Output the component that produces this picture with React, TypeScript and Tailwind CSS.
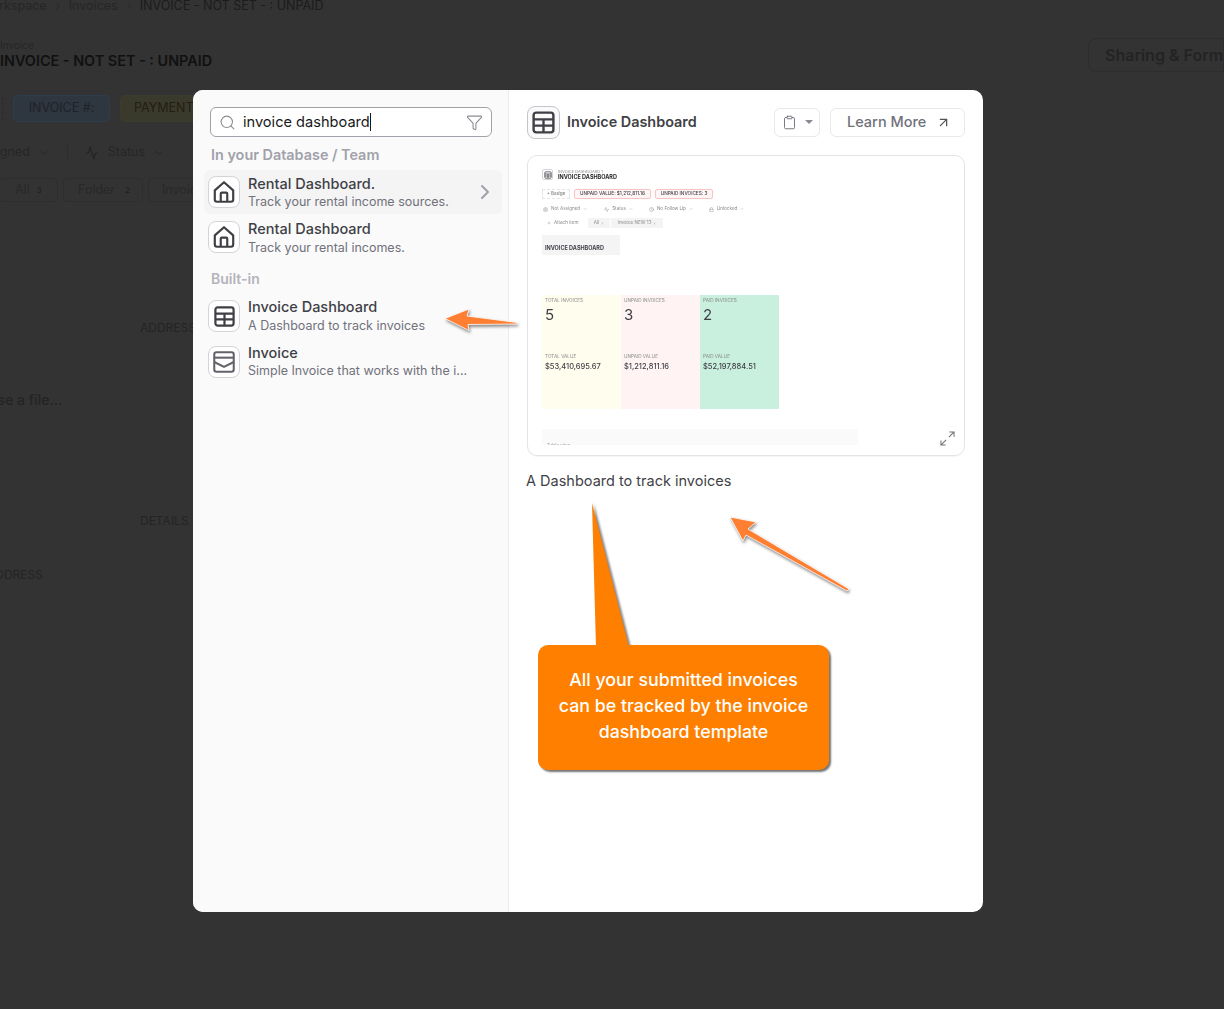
import React from "react";
import { Search, Funnel, ChevronRight, ChevronDown, Clipboard, ArrowUpRight, Activity, Plus, Clock, Lock, X } from "lucide-react";

const TableIcon = ({ size = 24, cls = "" }: { size?: number; cls?: string }) => (
  <svg width={size} height={size} viewBox="0 0 24 24" fill="none" stroke="currentColor" strokeWidth="2.300" className={cls}>
    <rect x="2.500" y="2.500" width="19" height="19" rx="2.500" />
    <path d="M2.500 9h19M2.500 15h19M12 9v12.500" />
  </svg>
);
const HomeIcon = ({ cls = "" }: { cls?: string }) => (
  <svg width="26" height="26" viewBox="0 0 24 24" fill="none" stroke="currentColor" strokeWidth="2" strokeLinejoin="round" className={cls}>
    <path d="M3.500 10.500 12 3l8.500 7.500V19a2 2 0 0 1-2 2h-13a2 2 0 0 1-2-2z" />
    <path d="M9 21v-7.500a1 1 0 0 1 1-1h4a1 1 0 0 1 1 1V21" />
  </svg>
);
const InvoiceIcon = ({ cls = "" }: { cls?: string }) => (
  <svg width="26" height="26" viewBox="0 0 24 24" fill="none" stroke="currentColor" strokeWidth="1.900" strokeLinejoin="round" className={cls}>
    <rect x="3" y="3" width="18" height="18" rx="2" />
    <path d="M3 8h18" />
    <path d="M3 12l9 4.500 9-4.500" />
  </svg>
);

const IconBox = ({ children }: { children: React.ReactNode }) => (
  <div className="w-[32px] h-[32px] shrink-0 rounded-[8px] border border-[#d4d4d8] bg-white flex items-center justify-center">{children}</div>
);

const Row = ({ icon, title, sub, active, h, textCls = "", subCls = "" }: { icon: React.ReactNode; title: string; sub: string; active?: boolean; h: string; textCls?: string; subCls?: string }) => (
  <div className={`flex items-center gap-[8px] pl-[4px] pr-[5px] rounded-[6px] ${h} ${active ? "bg-[#f4f4f5]" : ""}`}>
    <IconBox>{icon}</IconBox>
    <div className={`flex-1 min-w-0 ${textCls}`}>
      <div className="text-[14.5px] leading-[18px] font-medium text-[#3f3f46] whitespace-nowrap">{title}</div>
      <div className={`text-[12.5px] leading-[17px] text-[#71717a] whitespace-nowrap ${subCls}`}>{sub}</div>
    </div>
    {active && <ChevronRight size={24} className="text-[#a1a1aa]" />}
  </div>
);

const StatCard = ({ bg, a, n, b, v }: { bg: string; a: string; n: string; b: string; v: string }) => (
  <div className={`w-[79px] h-[114px] pl-[3px] pt-[3px] flex flex-col ${bg}`}>
    <div className="text-[4.700px] leading-[5px] text-[#8a8a8a]">{a}</div>
    <div className="text-[15px] leading-[18px] mt-[3px] text-[#3f3f46]">{n}</div>
    <div className="text-[4.700px] leading-[5px] mt-[30px] text-[#8a8a8a]">{b}</div>
    <div className="text-[7.500px] leading-[10px] mt-[3px] font-medium text-[#3f3f46]">{v}</div>
  </div>
);

export default function App() {
  return (
    <div className="relative h-[1009px] w-full overflow-hidden bg-[#333333] font-['Inter',sans-serif]">
      {/* dimmed page */}
      <div className="flex flex-col text-[#232323]">
        <div className="flex items-center h-[12px] -ml-[20px] text-[12.5px] text-[#262626] whitespace-nowrap">
          <span>Workspace</span>
          <ChevronRight size={12} className="mx-[5px] text-[#282828]" />
          <span>Invoices</span>
          <ChevronRight size={12} className="mx-[5px] text-[#282828]" />
          <span className="text-[#1c1c1c]">INVOICE - NOT SET - : UNPAID</span>
        </div>
        <div className="flex justify-between items-start mt-[26px] h-[57px]">
          <div className="pt-[1px]">
            <div className="text-[10px] leading-[12px] text-[#262626]">Invoice</div>
            <div className="text-[14.400px] leading-[18px] mt-[1px] font-semibold text-[#111111] whitespace-nowrap">INVOICE - NOT SET - : UNPAID</div>
          </div>
          <div className="w-[136px] h-[34px] overflow-hidden rounded-l-[8px] border border-[#2d2d2d] pl-[16px] flex items-center text-[16px] font-semibold text-[#232323] whitespace-nowrap">Sharing &amp; Forms</div>
        </div>
        <div className="flex gap-[10px] -ml-[8px] h-[27px]">
          <div className="w-[11px] rounded-[6px] border border-dashed border-[#2b2b2b]" />
          <div className="w-[97px] rounded-[5px] bg-[#2e3640] border border-[#2e3d4d] flex items-center justify-center text-[12.5px] text-[#1f2329]">INVOICE #:</div>
          <div className="w-[120px] rounded-[5px] bg-[#3a3a2c] border border-[#3c3c2c] pl-[13px] flex items-center text-[12.5px] text-[#241d10]">PAYMENT</div>
        </div>
        <div className="flex items-center h-[19px] mt-[21px] -ml-[25px] text-[12.5px] text-[#262626]">
          <span>Assigned</span>
          <ChevronDown size={12} className="ml-[8px]" />
          <div className="w-px h-[16px] bg-[#2d2d2d] mx-[17px]" />
          <Activity size={14} className="text-[#242424]" />
          <span className="ml-[9px]">Status</span>
          <ChevronDown size={12} className="ml-[8px]" />
        </div>
        <div className="flex gap-[5px] mt-[16px] h-[24px] -ml-[1px] text-[12.5px] text-[#282828]">
          <div className="w-[59px] rounded-[4px] border border-[#2e2e2e] pl-[15px] flex items-center gap-[7px]">All<span className="text-[8px] text-[#1f1f1f]">3</span></div>
          <div className="w-[80px] rounded-[4px] border border-[#2e2e2e] pl-[14px] flex items-center gap-[10px]">Folder<span className="text-[8px] text-[#1f1f1f]">2</span></div>
          <div className="w-[60px] rounded-[4px] border border-[#2e2e2e] pl-[13px] flex items-center">Invoice</div>
        </div>
        <div className="pl-[140px] mt-[118px] text-[12px] leading-[16px] text-[#242424]">ADDRESS</div>
        <div className="mt-[55px] -ml-[38px] text-[14px] leading-[18px] font-medium text-[#242424]">Choose a file...</div>
        <div className="pl-[140px] mt-[104px] text-[12px] leading-[16px] text-[#242424]">DETAILS</div>
        <div className="mt-[38px] -ml-[13px] text-[12px] leading-[16px] text-[#242424]">ADDRESS</div>
      </div>

      {/* modal */}
      <div className="absolute left-[193px] top-[90px] w-[790px] h-[822px] rounded-[10px] overflow-hidden bg-white flex">
        <div className="w-[316px] shrink-0 bg-[#fafafa] border-r border-[#ececee] pl-[11px] pr-[6px] pt-[17px]">
          <div className="ml-[6px] mr-[10px] h-[30px] rounded-[6px] border border-[#a1a1aa] bg-white flex items-center pl-[8px] pr-[8px]">
            <Search size={17} strokeWidth={1.500} className="text-[#8a8a93]" />
            <span className="ml-[7px] text-[14.600px] text-[#18181b] border-r border-[#18181b] leading-[18px]">invoice dashboard</span>
            <Funnel size={17} strokeWidth={1.500} className="ml-auto text-[#8a8a93]" />
          </div>
          <div className="ml-[7px] mt-[9px] text-[14.400px] leading-[18px] font-semibold text-[#a1a1aa]">In your Database / Team</div>
          <div className="mt-[6px]">
            <Row active h="h-[44px]" icon={<HomeIcon cls="text-[#3f3f46]" />} title="Rental Dashboard." sub="Track your rental income sources." />
            <div className="mt-[1px]"><Row h="h-[44px]" icon={<HomeIcon cls="text-[#3f3f46]" />} title="Rental Dashboard" sub="Track your rental incomes." textCls="mt-[1px]" subCls="mt-[1px]" /></div>
          </div>
          <div className="ml-[7px] mt-[11px] text-[14px] leading-[18px] font-semibold text-[#b4b4bb]">Built-in</div>
          <div className="mt-[5px]">
            <Row h="h-[46px]" icon={<TableIcon size={23} cls="text-[#3f3f46]" />} title="Invoice Dashboard" sub="A Dashboard to track invoices" textCls="-mt-[1px]" subCls="mt-[1px]" />
            <Row h="h-[46px]" icon={<InvoiceIcon cls="text-[#63636b]" />} title="Invoice" sub="Simple Invoice that works with the i..." textCls="-mt-[2px]" />
          </div>
        </div>

        <div className="flex-1 min-w-0 pl-[18px] pr-[18px] pt-[16px]">
          <div className="flex items-center h-[32px]">
            <div className="w-[33px] h-[33px] rounded-[8px] border border-[#c4c4ca] bg-[#fafafa] flex items-center justify-center"><TableIcon size={25} cls="text-[#3f3f46]" /></div>
            <div className="ml-[7px] text-[14.400px] font-semibold text-[#3f3f46]">Invoice Dashboard</div>
            <div className="ml-auto w-[46px] h-[29px] rounded-[6px] border border-[#e9e9ec] flex items-center pl-[7px]">
              <Clipboard size={15} strokeWidth={1.500} className="text-[#71717a]" />
              <span className="ml-[8px] w-0 h-0 border-l-[4px] border-r-[4px] border-t-[4px] border-l-transparent border-r-transparent border-t-[#8a8a93]" />
            </div>
            <div className="ml-[10px] w-[135px] h-[29px] rounded-[6px] border border-[#e9e9ec] flex items-center pl-[16px] text-[14.500px] font-medium text-[#71717a]">
              Learn More
              <ArrowUpRight size={15} className="ml-[10px] text-[#52525b]" />
            </div>
          </div>

          <div className="relative mt-[17px] h-[301px] rounded-[10px] border border-[#e4e4e7] overflow-hidden pl-[14px] pt-[13px] shadow-[0_1px_1px_rgba(0,0,0,0.04)] blur-[0.3px]">
            <div className="flex items-center gap-[5px]">
              <div className="w-[11px] h-[11px] rounded-[2px] border border-[#d4d4d8] flex items-center justify-center"><TableIcon size={8} cls="text-[#3f3f46]" /></div>
              <div>
                <div className="text-[4px] leading-[5px] text-[#8a8a8a]">INVOICE DASHBOARD 1</div>
                <div className="text-[5.500px] leading-[6px] font-bold text-[#27272a]">INVOICE DASHBOARD</div>
              </div>
            </div>
            <div className="flex gap-[4px] mt-[9px] h-[10px] text-[4.700px] font-medium">
              <div className="w-[28px] border border-dashed border-[#e4e4e7] rounded-[1px] flex items-center justify-center text-[#8a8a8a]">+ Badge</div>
              <div className="w-[77px] border border-[#f8c4c4] bg-[#fff5f5] rounded-[2px] flex items-center justify-center text-[#3f3f46] whitespace-nowrap">UNPAID VALUE: $1,212,811.16</div>
              <div className="w-[58px] border border-[#f8c4c4] bg-[#fff5f5] rounded-[2px] flex items-center justify-center text-[#3f3f46] whitespace-nowrap">UNPAID INVOICES: 3</div>
            </div>
            <div className="flex items-center mt-[5px] h-[10px] text-[4.600px] text-[#8a8a8a] pl-[1px] whitespace-nowrap">
              <span className="w-[5px] h-[5px] rounded-full bg-[#d4d4d8]" />
              <span className="ml-[3px]">Not Assigned</span><ChevronDown size={4} className="ml-[3px]" />
              <span className="ml-[17px]"><Activity size={5} /></span><span className="ml-[3px]">Status</span><ChevronDown size={4} className="ml-[3px]" />
              <span className="ml-[16px]"><Clock size={5} /></span><span className="ml-[3px]">No Follow Up</span><ChevronDown size={4} className="ml-[3px]" />
              <span className="ml-[16px]"><Lock size={5} /></span><span className="ml-[3px]">Unlocked</span><ChevronDown size={4} className="ml-[3px]" />
            </div>
            <div className="flex items-center mt-[4px] h-[10px] text-[4.600px] text-[#8a8a8a] whitespace-nowrap">
              <Plus size={4} className="ml-[5px]" />
              <span className="ml-[3px] w-[34px]">Attach item</span>
              <div className="w-[22px] h-[10px] bg-[#f4f4f5] flex items-center justify-center gap-[2px]">All<X size={3} /></div>
              <div className="ml-px w-[52px] h-[10px] bg-[#f4f4f5] flex items-center justify-center gap-[2px]">Invoice NEW 13<X size={3} /></div>
            </div>
            <div className="mt-[7px] w-[78px] h-[20px] bg-[#f4f4f5] flex items-end pl-[3px] pb-[4px] text-[5.500px] font-bold text-[#3f3f46] leading-[6px] whitespace-nowrap">INVOICE DASHBOARD</div>
            <div className="flex mt-[40px]">
              <StatCard bg="bg-[#fffeee]" a="TOTAL INVOICES" n="5" b="TOTAL VALUE" v="$53,410,695.67" />
              <StatCard bg="bg-[#fff3f3]" a="UNPAID INVOICES" n="3" b="UNPAID VALUE" v="$1,212,811.16" />
              <StatCard bg="bg-[#c9efdf]" a="PAID INVOICES" n="2" b="PAID VALUE" v="$52,197,884.51" />
            </div>
            <div className="mt-[20px] w-[316px] h-[16px] bg-[#fafafa] overflow-hidden pl-[5px] pt-[14px] text-[4.600px] text-[#a1a1aa] leading-[5px]">Table view</div>
            <svg width="15" height="15" viewBox="0 0 16 16" fill="none" stroke="#71717a" strokeWidth="1.100" className="absolute right-[9px] bottom-[9px]">
              <path d="M9.500 6.500 15 1M10 1h5v5M6.500 9.500 1 15M1 10v5h5" />
            </svg>
          </div>
          <div className="mt-[15px] -ml-[1px] text-[14.500px] leading-[20px] text-[#3f3f46]">A Dashboard to track invoices</div>
        </div>
      </div>

      {/* annotations */}
      <svg width="90" height="40" viewBox="0 0 90 40" className="absolute left-[438px] top-[300px] drop-shadow-[1px_2px_1.500px_rgba(0,0,0,0.45)]">
        <path d="M7 18.500 31 9l-2 7 50 6.500v1.500l-49 .5 1 6z" fill="#ff7f32" stroke="#ffffff" strokeWidth="0.800" strokeLinejoin="round" />
      </svg>
      <svg width="135" height="90" viewBox="0 0 135 90" className="absolute left-[722px] top-[510px] drop-shadow-[1px_2px_1.500px_rgba(0,0,0,0.45)]">
        <path d="M8 7 34 12 26 19 127 79 125 81 24 25 21 31z" fill="#ff7f32" stroke="#ffffff" strokeWidth="0.800" strokeLinejoin="round" />
      </svg>
      <svg width="50" height="146" viewBox="0 0 50 146" className="absolute left-[586px] top-[501px] drop-shadow-[2px_1px_1px_rgba(0,0,0,0.5)]">
        <path d="M6 2 10 146H43z" fill="#ff8000" />
      </svg>
      <div className="absolute left-[538px] top-[645px] w-[291px] h-[125px] rounded-[10px] bg-[#ff8000] shadow-[2px_2px_2px_rgba(0,0,0,0.55)] flex items-center justify-center text-center text-[17.800px] leading-[26px] font-medium text-white pb-[3px]">
        <div className="w-[258px]">All your submitted invoices can be tracked by the invoice dashboard template</div>
      </div>
    </div>
  );
}
